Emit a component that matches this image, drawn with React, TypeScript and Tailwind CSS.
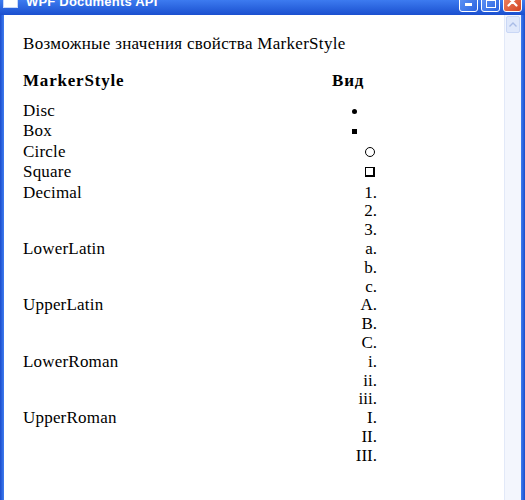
import React from "react";

// Rows of the MarkerStyle table: label + what each marker looks like
interface MarkerRow {
  name: string;
  marks: React.ReactNode[];
}

const rows: MarkerRow[] = [
  { name: "Disc", marks: [<span className="inline-block w-[5px] h-[5px] rounded-full bg-black mr-[20px]" />] },
  { name: "Box", marks: [<span className="inline-block w-[5px] h-[5px] bg-black mr-[20px]" />] },
  { name: "Circle", marks: [<span className="inline-block w-[10px] h-[10px] rounded-full border-[1.5px] border-black mr-[2px]" />] },
  { name: "Square", marks: [<span className="inline-block w-[10px] h-[10px] border border-black border-r-2 border-b-2 mr-[2px]" />] },
];

const lists: MarkerRow[] = [
  { name: "Decimal", marks: ["1.", "2.", "3."] },
  { name: "LowerLatin", marks: ["a.", "b.", "c."] },
  { name: "UpperLatin", marks: ["A.", "B.", "C."] },
  { name: "LowerRoman", marks: ["i.", "ii.", "iii."] },
  { name: "UpperRoman", marks: ["I.", "II.", "III."] },
];

const TitleBar: React.FC = () => (
  <div className="h-[15px] overflow-hidden bg-gradient-to-b from-[#3d7bf0] to-[#1b4fcf]">
    <div className="-mt-[15px] h-[30px] flex items-center px-[3px]">
      <div className="w-[15px] h-[13px] bg-white border border-[#c8d8f8] mt-[2px]" />
      <span className="ml-[8px] text-white font-bold text-[13px] mt-[3px] [font-family:'Liberation_Sans',sans-serif] tracking-[0.2px]">
        WPF Documents API
      </span>
      <div className="flex-1" />
      <div className="flex gap-[3px] mt-[3px]">
        <div className="w-[19px] h-[21px] rounded-[3px] border border-white bg-gradient-to-br from-[#6a9cf8] to-[#2a62e0] flex items-end justify-center pb-[5px]">
          <div className="w-[7px] h-[3px] bg-white" />
        </div>
        <div className="w-[19px] h-[21px] rounded-[3px] border border-white bg-gradient-to-br from-[#6a9cf8] to-[#2a62e0] flex items-center justify-center">
          <div className="w-[10px] h-[10px] border border-white border-t-[3px] mt-[2px]" />
        </div>
        <div className="w-[19px] h-[21px] rounded-[3px] border border-white bg-gradient-to-br from-[#f08a6a] to-[#d34420] flex items-center justify-center">
          <svg width="11" height="11" viewBox="0 0 11 11">
            <path d="M1.5 1.5 L9.5 9.5 M9.5 1.5 L1.5 9.5" stroke="white" strokeWidth="2.2" strokeLinecap="round" />
          </svg>
        </div>
      </div>
    </div>
  </div>
);

const App: React.FC = () => {
  return (
    <div className="w-[525px] h-[500px] flex flex-col bg-[#1c50d6] overflow-hidden">
      <TitleBar />
      <div className="flex flex-1 min-h-0">
        {/* left frame */}
        <div className="w-[4px] bg-gradient-to-r from-[#1b4ccc] to-[#3f7cf0]" />
        {/* document */}
        <div className="flex-1 bg-white text-black [font-family:'Liberation_Serif',serif] text-[17px] pl-[19px] pt-[18px]">
          <p className="leading-[22px] tracking-[0.3px]">Возможные значения свойства MarkerStyle</p>

          <div className="grid grid-cols-[309px_45px] mt-[15px]">
            <div className="font-bold leading-[22px] tracking-[0.8px]">MarkerStyle</div>
            <div className="font-bold leading-[22px] tracking-[0.8px]">Вид</div>
          </div>

          <div className="grid grid-cols-[309px_45px] mt-[9px]">
            {rows.map((r) => (
              <React.Fragment key={r.name}>
                <div className="h-[20.4px] leading-[20px] tracking-[0.2px]">{r.name}</div>
                <div className="h-[20.4px] flex items-center justify-end">{r.marks[0]}</div>
              </React.Fragment>
            ))}
            {lists.map((r) => (
              <React.Fragment key={r.name}>
                <div className="leading-[19px] tracking-[0.2px]">{r.name}</div>
                <div className="flex flex-col items-end">
                  {r.marks.map((m, i) => (
                    <div key={i} className="h-[18.8px] leading-[19px]">
                      {m}
                    </div>
                  ))}
                </div>
              </React.Fragment>
            ))}
          </div>
        </div>
        {/* scrollbar */}
        <div className="w-[17px] bg-[#f3f6fd] border-l border-[#e2e9f8] flex flex-col">
          <div className="h-[17px] m-[1px] rounded-[2px] bg-[#dfe8fb] border border-[#c9d7f5] flex items-center justify-center">
            <svg width="8" height="5" viewBox="0 0 8 5">
              <path d="M0.5 4.5 L4 1 L7.5 4.5" fill="none" stroke="#a9bce6" strokeWidth="1.4" />
            </svg>
          </div>
        </div>
        {/* right frame */}
        <div className="w-[4px] bg-gradient-to-r from-[#3f7cf0] to-[#1b4ccc]" />
      </div>
    </div>
  );
};

export default App;
